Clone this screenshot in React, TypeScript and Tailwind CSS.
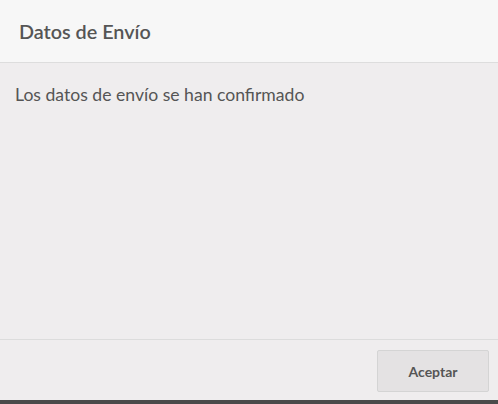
export default function App() {
  return (
    <div className="w-[498px] h-[404px] flex flex-col bg-[#4a4a4a]" style={{ fontFamily: "Lato, 'Noto Sans', sans-serif" }}>
      <div className="h-[400px] flex flex-col bg-[#efedee]">
        <div className="h-[63px] shrink-0 bg-[#f7f7f7] border-b border-[#dddddd] flex items-center px-[19px]">
          <h2 className="text-[19.8px] leading-[24px] font-semibold text-[#555555]">Datos de Envío</h2>
        </div>
        <div className="flex-1 px-[15px] pt-[20px]">
          <p className="text-[17.6px] leading-[24px] font-normal text-[#555555]">Los datos de envío se han confirmado</p>
        </div>
        <div className="h-[61px] shrink-0 border-t border-[#dcdcdc] flex items-start justify-end pt-[10px] pr-[9px]">
          <button className="w-[112px] h-[42px] bg-[#e4e2e3] border border-[#d4d4d4] rounded-[2px] text-[14px] font-bold text-[#555555]">
            Aceptar
          </button>
        </div>
      </div>
    </div>
  );
}
